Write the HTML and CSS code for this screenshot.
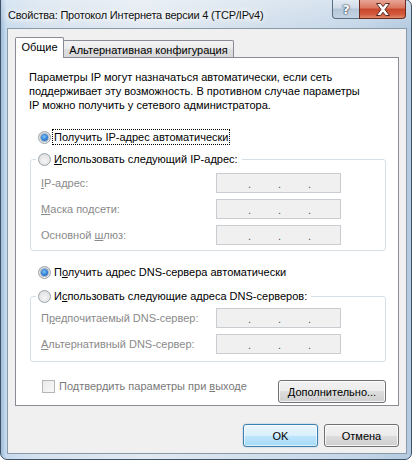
FILE: index.html
```html
<!DOCTYPE html>
<html lang="ru">
<head>
<meta charset="utf-8">
<title>Свойства: Протокол Интернета версии 4 (TCP/IPv4)</title>
<link rel="stylesheet" href="styles.css">
</head>
<body>
<div class="window">
  <div class="titlebar">
    <div class="title">Свойства: Протокол Интернета версии 4 (TCP/IPv4)</div>
    <div class="caption-btns">
      <div class="cbtn help">?</div>
      <div class="cbtn close">
        <svg width="16" height="13" viewBox="0 0 16 13"><path d="M1.5 0.5h4l2.5 3 2.5-3h4l-4.5 6 4.5 6h-4l-2.5-3.2-2.5 3.2h-4l4.5-6z" fill="#fff" stroke="#5a2a20" stroke-width="1" stroke-linejoin="round"/></svg>
      </div>
    </div>
  </div>
  <div class="client">
    <div class="tabs">
      <div class="tab active">Общие</div>
      <div class="tab">Альтернативная конфигурация</div>
    </div>
    <div class="panel">
      <p class="intro">Параметры IP могут назначаться автоматически, если сеть<br>поддерживает эту возможность. В противном случае параметры<br>IP можно получить у сетевого администратора.</p>

      <div class="option opt-ip"><span class="radio on"></span><span class="focus">Получить IP-адрес автоматически</span></div>
      <fieldset class="group group-ip">
        <legend class="option"><span class="radio"></span><span><u>И</u>спользовать следующий IP-адрес:</span></legend>
        <div class="row"><span class="lbl"><u>I</u>P-адрес:</span><span class="ip"><i>.</i><i>.</i><i>.</i></span></div>
        <div class="row"><span class="lbl"><u>М</u>аска подсети:</span><span class="ip"><i>.</i><i>.</i><i>.</i></span></div>
        <div class="row"><span class="lbl">Основной <u>ш</u>люз:</span><span class="ip"><i>.</i><i>.</i><i>.</i></span></div>
      </fieldset>

      <div class="option opt-dns"><span class="radio on"></span><span>П<u>о</u>лучить адрес DNS-сервера автоматически</span></div>
      <fieldset class="group group-dns">
        <legend class="option"><span class="radio"></span><span>И<u>с</u>пользовать следующие адреса DNS-серверов:</span></legend>
        <div class="row"><span class="lbl">П<u>р</u>едпочитаемый DNS-сервер:</span><span class="ip"><i>.</i><i>.</i><i>.</i></span></div>
        <div class="row"><span class="lbl"><u>А</u>льтернативный DNS-сервер:</span><span class="ip"><i>.</i><i>.</i><i>.</i></span></div>
      </fieldset>

      <div class="bottom-row">
        <div class="check"><span class="box"></span><span>Подтвердить параметры при <u>в</u>ыходе</span></div>
        <div class="btn btn-adv"><span><u>Д</u>ополнительно...</span></div>
      </div>
    </div>
    <div class="footer">
      <div class="btn default">OK</div>
      <div class="btn">Отмена</div>
    </div>
  </div>
</div>
</body>
</html>
```
FILE: styles.css
```css
html, body {
  margin: 0;
  padding: 0;
  background: #ffffff;
}

body {
  font-family: "Liberation Sans", Arial, sans-serif;
  font-size: 11px;
  color: #000;
  overflow: hidden;
}

.window {
  box-sizing: border-box;
  width: 412px;
  height: 461px;
  margin-top: -1px;
  border: 1px solid #3f5164;
  border-radius: 0 7px 7px 7px;
  background:
    linear-gradient(180deg, rgba(255,255,255,0.3) 0, rgba(255,255,255,0) 30px),
    linear-gradient(90deg, #9fbcd9 0, #c7dbee 5px, #d6e2ee 10%, #e1e9f2 35%, #d3e0ec 60%, #c6d7e8 85%, #b4cae0 100%);
  display: flex;
  flex-direction: column;
}

/* title bar */
.titlebar {
  height: 28px;
  display: flex;
  align-items: flex-start;
}

.title {
  padding-left: 7px;
  padding-top: 8px;
  line-height: 15px;
  font-size: 11px;
  letter-spacing: -0.2px;
  color: #111;
  text-shadow: 0 0 6px #fff, 0 0 6px #fff, 0 0 10px #fff;
  white-space: nowrap;
}

.caption-btns {
  margin-left: auto;
  margin-right: 5px;
  display: flex;
}

.cbtn {
  box-sizing: border-box;
  height: 19px;
  display: flex;
  align-items: center;
  justify-content: center;
  border: 1px solid #5b6d80;
  border-top: none;
}

.help {
  width: 27px;
  border-radius: 0 0 0 4px;
  border-right: none;
  background: linear-gradient(180deg, #e3ebf3 0, #cfdbe7 45%, #b4c6d8 50%, #c4d4e4 100%);
  color: #fff;
  font-family: "DejaVu Sans", sans-serif;
  font-weight: bold;
  font-size: 13px;
  text-shadow: 0 0 1px #33475c, 0 0 1px #33475c, 0 0 2px #33475c;
}

.close {
  width: 47px;
  border-color: #6a2a1e;
  border-radius: 0 0 4px 0;
  background: linear-gradient(180deg, #e8a596 0, #d9765f 45%, #c8452b 50%, #d25a3d 80%, #e38a6b 100%);
}

/* client */
.client {
  box-sizing: border-box;
  width: 400px;
  height: 426px;
  margin-left: 6px;
  border: 1px solid #8899aa;
  background: #f0f0f0;
  padding: 8px 7px 0 7px;
  display: flex;
  flex-direction: column;
}

.tabs {
  height: 21px;
  margin-bottom: -1px;
  display: flex;
  align-items: flex-end;
}

.tab {
  box-sizing: border-box;
  border: 1px solid #898c95;
  border-bottom: none;
  display: flex;
  align-items: center;
  justify-content: center;
  white-space: nowrap;
}

.tab.active {
  width: 49px;
  height: 21px;
  background: #fff;
  position: relative;
  z-index: 1;
  padding-bottom: 2px;
  border-radius: 2px 2px 0 0;
}

.tab:not(.active) {
  width: 171px;
  height: 17px;
  margin-left: -1px;
  margin-bottom: 1px;
  background: linear-gradient(180deg, #f3f3f3 0, #ebebeb 50%, #dedede 50%, #d8d8d8 100%);
  border-radius: 2px 2px 0 0;
  padding-top: 1px;
}

.panel {
  box-sizing: border-box;
  width: 384px;
  height: 349px;
  border: 1px solid #898c95;
  background: #fff;
  padding: 12px 0 0 13px;
}

.intro {
  margin: 0;
  line-height: 14px;
  white-space: nowrap;
}

.option {
  display: flex;
  align-items: center;
  height: 14px;
  line-height: 14px;
  gap: 3px;
  white-space: nowrap;
}

.opt-ip,
.opt-dns {
  padding-left: 9px;
}

.opt-ip { margin-top: 18px; }
.opt-dns { margin-top: 14px; }

.focus {
  outline: 1px dotted #000;
  outline-offset: 0;
  padding: 0 1px;
  margin-left: -1px;
}

.radio {
  box-sizing: border-box;
  width: 13px;
  height: 13px;
  flex: none;
  border-radius: 50%;
  border: 1px solid #9aa3ab;
  background: radial-gradient(circle at 50% 60%, #f6f6f6 0, #e4e4e4 60%, #d2d2d2 100%);
  display: flex;
  align-items: center;
  justify-content: center;
}

.radio.on::after {
  content: "";
  width: 7px;
  height: 7px;
  border-radius: 50%;
  background: radial-gradient(circle at 45% 40%, #7fc3f5 0, #2f7fd4 55%, #16489a 100%);
  box-shadow: 0 0 0 1px rgba(40, 80, 130, 0.35);
}

.group {
  box-sizing: border-box;
  width: 356px;
  margin: 8px 0 0 1px;
  padding: 7px 10px 5px 10px;
  border: 1px solid #d5dfe5;
  border-radius: 3px;
  min-width: 0;
  display: flex;
  flex-direction: column;
  gap: 6px;
}

.group legend {
  margin-left: -5px;
  padding: 0 4px 0 2px;
}

.group-dns {
  margin-top: 10px;
  padding-top: 5px;
  padding-bottom: 7px;
}

.row {
  display: flex;
  align-items: center;
  height: 20px;
  color: #8a8a8a;
}

.lbl {
  width: 175px;
  white-space: nowrap;
}

.ip {
  box-sizing: border-box;
  width: 125px;
  height: 20px;
  border: 1px solid #c9ccd0;
  background: #f0f0f0;
  display: flex;
  align-items: center;
  padding-left: 31px;
  color: #555;
}

.ip i {
  font-style: normal;
  width: 30px;
  line-height: 14px;
  padding-top: 2px;
}

.bottom-row {
  margin-top: 17px;
  display: flex;
  align-items: flex-start;
  width: 356px;
  margin-left: 1px;
}

.check {
  display: flex;
  align-items: center;
  height: 14px;
  gap: 4px;
  margin-left: 12px;
  color: #7a7a7a;
  white-space: nowrap;
}

.box {
  box-sizing: border-box;
  width: 13px;
  height: 13px;
  border: 1px solid #b5b5b5;
  background: linear-gradient(135deg, #eaeaea, #f8f8f8);
}

.btn {
  box-sizing: border-box;
  width: 75px;
  height: 23px;
  border: 1px solid #707070;
  border-radius: 3px;
  background: linear-gradient(180deg, #f2f2f2 0, #ebebeb 50%, #dddddd 50%, #cfcfcf 100%);
  box-shadow: inset 0 0 0 1px rgba(255,255,255,0.8);
  display: flex;
  align-items: center;
  justify-content: center;
  white-space: nowrap;
}

.btn-adv {
  margin-left: auto;
  width: 108px;
  margin-top: 1px;
}

.btn.default {
  border-color: #3c7fb1;
  background: linear-gradient(180deg, #eaf6fd 0, #d9f0fc 50%, #bee6fd 50%, #a7d9f5 100%);
  box-shadow: inset 0 0 0 1px rgba(255,255,255,0.6), 0 0 2px rgba(60,127,177,0.4);
}

.footer {
  margin-top: 18px;
  display: flex;
  justify-content: flex-end;
  gap: 6px;
}
```
